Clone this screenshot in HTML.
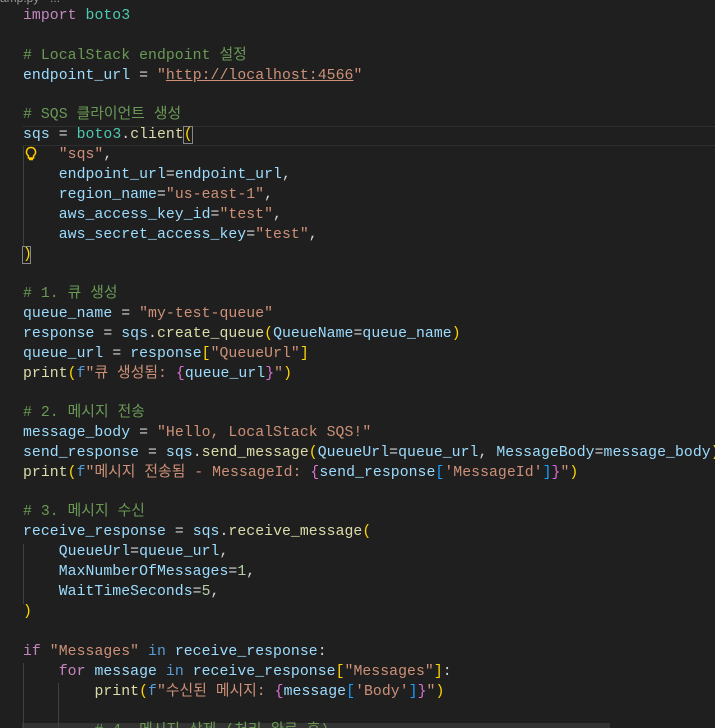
<!DOCTYPE html>
<html><head><meta charset="utf-8"><style>
html,body{margin:0;padding:0;background:#1f1f1f;width:715px;height:728px;overflow:hidden}
#ed{position:relative;width:715px;height:728px;font-family:"Liberation Mono","Noto Sans CJK KR",monospace;font-size:14.8px;color:#cccccc}
.l{position:absolute;left:23px;height:20px;line-height:20px;white-space:pre;letter-spacing:0.05px}
.k{color:#c586c0}.b{color:#569cd6}.m{color:#4ec9b0}.v{color:#9cdcfe}.s{color:#ce9178}.f{color:#dcdcaa}.c{color:#6a9955}.p{color:#d4d4d4}
.y{color:#ffd700}.pk{color:#da70d6}.bl{color:#179fff}.n{color:#b5cea8}
.g{position:absolute;width:1px;background:#404040}
</style></head><body><div id="ed">
<div style="position:absolute;left:0;top:-9px;font-size:12px;color:#999;font-family:'Liberation Sans',sans-serif">amp.py - ...</div>
<div style="position:absolute;left:22px;top:126px;width:693px;height:18px;border-top:1px solid #2e2e2e;border-bottom:1px solid #2e2e2e"></div>
<div style="position:absolute;left:22px;top:723px;width:588px;height:6px;background:#333"></div>
<div class="g" style="left:23px;top:146px;height:100px"></div>
<div class="g" style="left:23px;top:544px;height:60px"></div>
<div class="g" style="left:23px;top:663px;height:65px"></div>
<div class="g" style="left:58px;top:683px;height:45px"></div>
<div style="position:absolute;left:183px;top:126px;width:10px;height:18px;border:1px solid #888;box-sizing:border-box"></div>
<div style="position:absolute;left:22px;top:246px;width:9px;height:18px;border:1px solid #888;box-sizing:border-box"></div>
<svg style="position:absolute;left:24px;top:146px" width="14" height="16" viewBox="0 0 14 16"><path d="M7 1.5a4.5 4.5 0 0 0-2.6 8.2V12h5.2V9.7A4.5 4.5 0 0 0 7 1.5z M5 13.5h4" fill="none" stroke="#ffcc00" stroke-width="1.5"/></svg>
<div class="l" style="top:6px"><span class="k">import</span> <span class="m">boto3</span></div>
<div class="l" style="top:46px"><span class="c"># LocalStack endpoint 설정</span></div>
<div class="l" style="top:66px"><span class="v">endpoint_url</span> <span class="p">=</span> <span class="s">"<span style="text-decoration:underline">http://localhost:4566</span>"</span></div>
<div class="l" style="top:105px"><span class="c"># SQS 클라이언트 생성</span></div>
<div class="l" style="top:125px"><span class="v">sqs</span> <span class="p">=</span> <span class="m">boto3</span><span class="p">.</span><span class="f">client</span><span class="y">(</span></div>
<div class="l" style="top:145px">    <span class="s">"sqs"</span><span class="p">,</span></div>
<div class="l" style="top:165px">    <span class="v">endpoint_url</span><span class="p">=</span><span class="v">endpoint_url</span><span class="p">,</span></div>
<div class="l" style="top:185px">    <span class="v">region_name</span><span class="p">=</span><span class="s">"us-east-1"</span><span class="p">,</span></div>
<div class="l" style="top:205px">    <span class="v">aws_access_key_id</span><span class="p">=</span><span class="s">"test"</span><span class="p">,</span></div>
<div class="l" style="top:225px">    <span class="v">aws_secret_access_key</span><span class="p">=</span><span class="s">"test"</span><span class="p">,</span></div>
<div class="l" style="top:245px"><span class="y">)</span></div>
<div class="l" style="top:284px"><span class="c"># 1. 큐 생성</span></div>
<div class="l" style="top:304px"><span class="v">queue_name</span> <span class="p">=</span> <span class="s">"my-test-queue"</span></div>
<div class="l" style="top:324px"><span class="v">response</span> <span class="p">=</span> <span class="v">sqs</span><span class="p">.</span><span class="f">create_queue</span><span class="y">(</span><span class="v">QueueName</span><span class="p">=</span><span class="v">queue_name</span><span class="y">)</span></div>
<div class="l" style="top:344px"><span class="v">queue_url</span> <span class="p">=</span> <span class="v">response</span><span class="y">[</span><span class="s">"QueueUrl"</span><span class="y">]</span></div>
<div class="l" style="top:364px"><span class="f">print</span><span class="y">(</span><span class="b">f</span><span class="s">"큐 생성됨: </span><span class="pk">{</span><span class="v">queue_url</span><span class="pk">}</span><span class="s">"</span><span class="y">)</span></div>
<div class="l" style="top:403px"><span class="c"># 2. 메시지 전송</span></div>
<div class="l" style="top:423px"><span class="v">message_body</span> <span class="p">=</span> <span class="s">"Hello, LocalStack SQS!"</span></div>
<div class="l" style="top:443px"><span class="v">send_response</span> <span class="p">=</span> <span class="v">sqs</span><span class="p">.</span><span class="f">send_message</span><span class="y">(</span><span class="v">QueueUrl</span><span class="p">=</span><span class="v">queue_url</span><span class="p">,</span> <span class="v">MessageBody</span><span class="p">=</span><span class="v">message_body</span><span class="y">)</span></div>
<div class="l" style="top:463px"><span class="f">print</span><span class="y">(</span><span class="b">f</span><span class="s">"메시지 전송됨 - MessageId: </span><span class="pk">{</span><span class="v">send_response</span><span class="bl">[</span><span class="s">'MessageId'</span><span class="bl">]</span><span class="pk">}</span><span class="s">"</span><span class="y">)</span></div>
<div class="l" style="top:502px"><span class="c"># 3. 메시지 수신</span></div>
<div class="l" style="top:522px"><span class="v">receive_response</span> <span class="p">=</span> <span class="v">sqs</span><span class="p">.</span><span class="f">receive_message</span><span class="y">(</span></div>
<div class="l" style="top:542px">    <span class="v">QueueUrl</span><span class="p">=</span><span class="v">queue_url</span><span class="p">,</span></div>
<div class="l" style="top:562px">    <span class="v">MaxNumberOfMessages</span><span class="p">=</span><span class="n">1</span><span class="p">,</span></div>
<div class="l" style="top:582px">    <span class="v">WaitTimeSeconds</span><span class="p">=</span><span class="n">5</span><span class="p">,</span></div>
<div class="l" style="top:602px"><span class="y">)</span></div>
<div class="l" style="top:642px"><span class="k">if</span> <span class="s">"Messages"</span> <span class="b">in</span> <span class="v">receive_response</span><span class="p">:</span></div>
<div class="l" style="top:662px">    <span class="k">for</span> <span class="v">message</span> <span class="b">in</span> <span class="v">receive_response</span><span class="y">[</span><span class="s">"Messages"</span><span class="y">]</span><span class="p">:</span></div>
<div class="l" style="top:682px">        <span class="f">print</span><span class="y">(</span><span class="b">f</span><span class="s">"수신된 메시지: </span><span class="pk">{</span><span class="v">message</span><span class="bl">[</span><span class="s">'Body'</span><span class="bl">]</span><span class="pk">}</span><span class="s">"</span><span class="y">)</span></div>
<div class="l" style="top:721px">        <span class="c"># 4. 메시지 삭제 (처리 완료 후)</span></div>
</div></body></html>
